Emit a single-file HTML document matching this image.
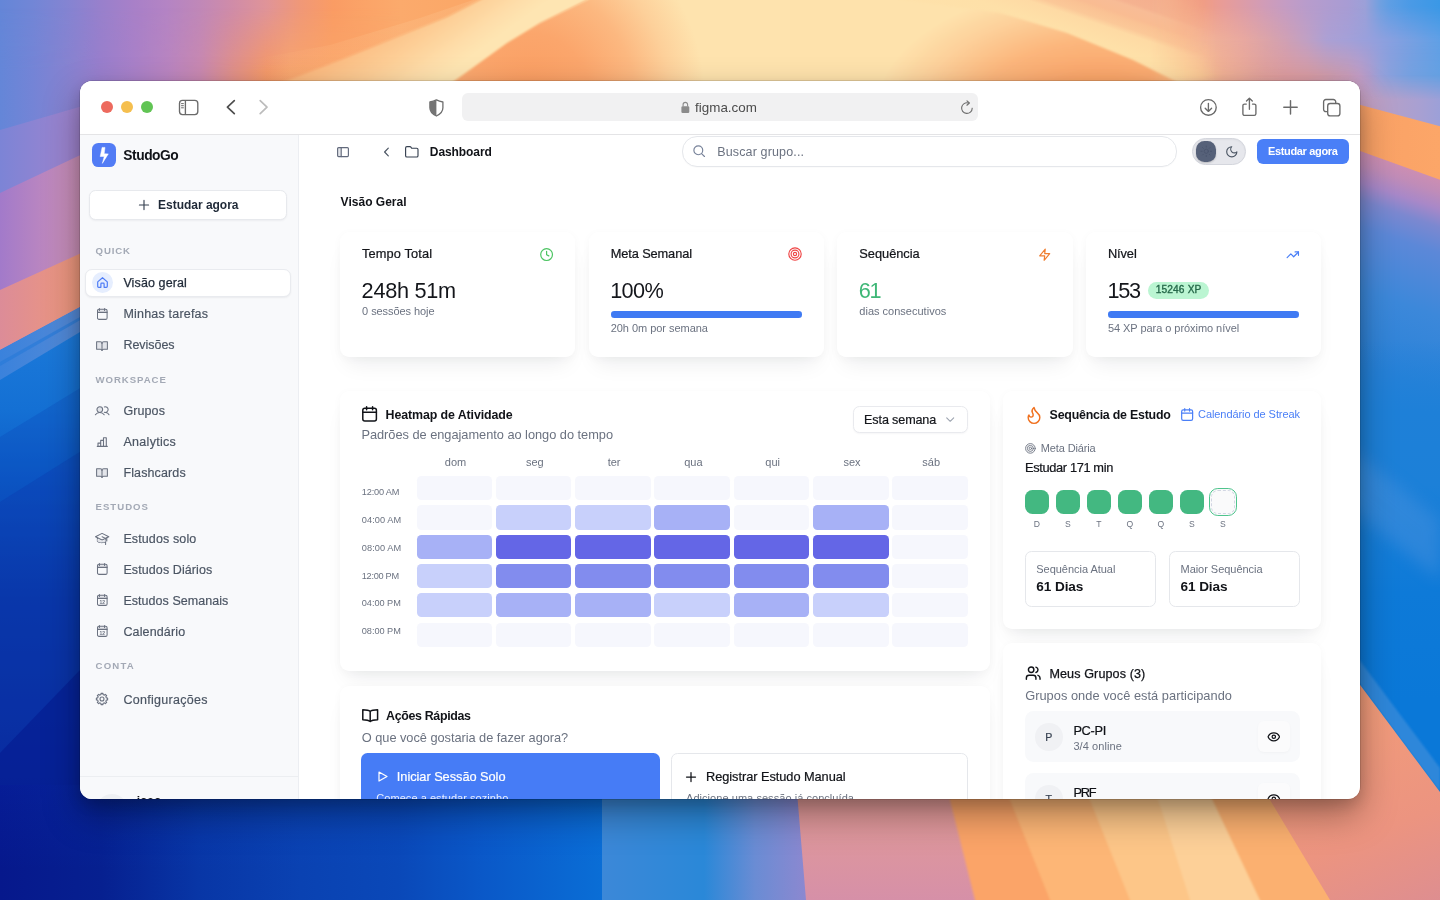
<!DOCTYPE html>
<html lang="pt-BR">
<head>
<meta charset="utf-8">
<title>StudoGo – Dashboard</title>
<style>
*{box-sizing:border-box;margin:0;padding:0}
html,body{width:1440px;height:900px;overflow:hidden;background:#0a38a8}
body{font-family:"Liberation Sans",sans-serif;color:#111827;position:relative}
.abs{position:absolute}
#wall{position:absolute;left:0;top:0;width:1440px;height:900px;display:block}
#win{position:absolute;left:80px;top:81px;width:1280px;height:718px;border-radius:12px;background:#fff;overflow:hidden;z-index:2}
#c{position:absolute;left:-80px;top:-81px;width:1440px;height:900px}
#win{will-change:transform;transform:translateZ(0)}
#shadow{position:absolute;left:80px;top:81px;width:1280px;height:718px;border-radius:12px;z-index:1;box-shadow:0 0 0 0.5px rgba(0,0,0,.22),0 16px 36px rgba(0,0,0,.34),0 6px 14px rgba(0,0,0,.14)}
.t{position:absolute;white-space:nowrap;line-height:1}
svg{display:block;overflow:visible}
.ico{position:absolute}

.card{position:absolute;background:#fff;border-radius:9px;box-shadow:0 14px 22px -8px rgba(17,24,39,.08),0 2px 10px rgba(17,24,39,.03)}
.med{-webkit-text-stroke:.22px currentColor}

</style>
</head>
<body>
<svg id="wall" viewBox="0 0 1440 900" width="1440" height="900" preserveAspectRatio="none">
<defs>
 <linearGradient id="gTopL" gradientUnits="userSpaceOnUse" x1="0" y1="0" x2="600" y2="0"><stop offset="0.000" stop-color="#6486d8"/><stop offset="0.055" stop-color="#7286d6"/><stop offset="0.112" stop-color="#8484d2"/><stop offset="0.167" stop-color="#9880cc"/><stop offset="0.222" stop-color="#a880c8"/><stop offset="0.278" stop-color="#b484c4"/><stop offset="0.333" stop-color="#c088b8"/><stop offset="0.388" stop-color="#d08ca8"/><stop offset="0.445" stop-color="#e09498"/><stop offset="0.500" stop-color="#f09878"/><stop offset="0.555" stop-color="#fa9c64"/><stop offset="0.612" stop-color="#fba468"/><stop offset="0.667" stop-color="#fbaa6c"/><stop offset="0.750" stop-color="#fba868"/><stop offset="1.000" stop-color="#fba468"/></linearGradient>
 <linearGradient id="rowB" gradientUnits="userSpaceOnUse" x1="0" y1="0" x2="400" y2="0"><stop offset="0.000" stop-color="#6486d8"/><stop offset="0.083" stop-color="#7484d6"/><stop offset="0.168" stop-color="#8682d0"/><stop offset="0.250" stop-color="#987ecc"/><stop offset="0.333" stop-color="#a880c8"/><stop offset="0.417" stop-color="#b884c0"/><stop offset="0.500" stop-color="#c888b0"/><stop offset="0.583" stop-color="#e09088"/><stop offset="0.667" stop-color="#f49868"/><stop offset="0.725" stop-color="#f8a46c"/><stop offset="0.825" stop-color="#faa468"/><stop offset="0.917" stop-color="#fba468"/><stop offset="1.000" stop-color="#fbaa6c"/></linearGradient>
 <linearGradient id="gmB" gradientUnits="userSpaceOnUse" x1="0" y1="8" x2="0" y2="72"><stop offset="0" stop-color="#fff" stop-opacity="0"/><stop offset="1" stop-color="#fff" stop-opacity="1"/></linearGradient>
 <mask id="mB" maskUnits="userSpaceOnUse" x="-5" y="-5" width="410" height="110"><rect x="-5" y="-5" width="410" height="110" fill="url(#gmB)"/></mask>
 <radialGradient id="gHumpL" gradientUnits="userSpaceOnUse" cx="0" cy="0" r="1" gradientTransform="translate(530 100) scale(175 190)">
  <stop offset="0" stop-color="#fa9c60"/><stop offset=".35" stop-color="#fba66c"/><stop offset=".6" stop-color="#fcb880"/><stop offset=".8" stop-color="#fdd09a"/><stop offset="1" stop-color="#fee3ae"/>
 </radialGradient>
 <radialGradient id="gHumpR" gradientUnits="userSpaceOnUse" cx="0" cy="0" r="1" gradientTransform="translate(1100 112) scale(225 128)">
  <stop offset="0" stop-color="#f8a062"/><stop offset=".3" stop-color="#faa76c"/><stop offset=".55" stop-color="#fcb67c"/><stop offset=".8" stop-color="#fdd09a"/><stop offset="1" stop-color="#fee2ac"/>
 </radialGradient>
 <linearGradient id="gPeachBand" gradientUnits="userSpaceOnUse" x1="340" y1="15" x2="405" y2="105">
  <stop offset="0" stop-color="#fbaa70"/><stop offset=".3" stop-color="#fcbc82"/><stop offset=".6" stop-color="#fdce96"/><stop offset=".85" stop-color="#fedeaa"/><stop offset="1" stop-color="#fee5b2"/>
 </linearGradient>
 <linearGradient id="gTopR" gradientUnits="userSpaceOnUse" x1="960" y1="40" x2="1021.8" y2="-141.8">
  <stop offset="0" stop-color="#fee2ac"/><stop offset=".225" stop-color="#fee0a8"/><stop offset=".31" stop-color="#fedaa4"/>
  <stop offset=".34" stop-color="#fbc898"/><stop offset=".38" stop-color="#fac294"/><stop offset=".40" stop-color="#f9bc92"/><stop offset=".45" stop-color="#f8bc96"/><stop offset=".47" stop-color="#f5b290"/><stop offset=".55" stop-color="#f4ae8e"/><stop offset=".62" stop-color="#f0a084"/><stop offset="1" stop-color="#ec9c88"/>
 </linearGradient>
 <linearGradient id="gTopB" gradientUnits="userSpaceOnUse" x1="1181" y1="0" x2="1310.4" y2="-129.4">
  <stop offset="0" stop-color="#eca094" stop-opacity="0"/><stop offset=".244" stop-color="#e29aa0" stop-opacity=".9"/><stop offset=".322" stop-color="#d0a0c0"/><stop offset=".42" stop-color="#c0a0c8"/><stop offset=".497" stop-color="#b0a0d0"/>
  <stop offset=".612" stop-color="#a0a0d8"/><stop offset=".847" stop-color="#70a0e0"/><stop offset="1" stop-color="#3a98e8"/>
 </linearGradient>
 <linearGradient id="gFaint" gradientUnits="userSpaceOnUse" x1="250" y1="0" x2="400" y2="0"><stop offset="0" stop-color="#fdc088" stop-opacity="0"/><stop offset="1" stop-color="#fdc088" stop-opacity=".35"/></linearGradient>
 <!-- left strip band gradients (horizontal) -->
 <linearGradient id="l1" gradientUnits="userSpaceOnUse" x1="0" y1="0" x2="133" y2="0"><stop offset="0.000" stop-color="#6486d8"/><stop offset="0.248" stop-color="#7484d6"/><stop offset="0.504" stop-color="#8682d0"/><stop offset="0.752" stop-color="#987ecc"/><stop offset="1.000" stop-color="#a680c8"/></linearGradient>
 <linearGradient id="l2" gradientUnits="userSpaceOnUse" x1="0" y1="0" x2="95" y2="0"><stop offset="0" stop-color="#7c84d6"/><stop offset="1" stop-color="#a884cc"/></linearGradient>
 <linearGradient id="l3" gradientUnits="userSpaceOnUse" x1="0" y1="0" x2="95" y2="0"><stop offset="0" stop-color="#a27aca"/><stop offset=".45" stop-color="#ba86c0"/><stop offset="1" stop-color="#d294b2"/></linearGradient>
 <linearGradient id="l4" gradientUnits="userSpaceOnUse" x1="0" y1="0" x2="95" y2="0"><stop offset="0" stop-color="#dc8c98"/><stop offset="1" stop-color="#f29a76"/></linearGradient>
 <linearGradient id="l5" gradientUnits="userSpaceOnUse" x1="0" y1="0" x2="95" y2="0"><stop offset="0" stop-color="#3a82dc"/><stop offset="1" stop-color="#5a8cd6"/></linearGradient>
 <linearGradient id="lBlue" gradientUnits="userSpaceOnUse" x1="0" y1="330" x2="0" y2="900">
  <stop offset="0" stop-color="#1c7ada"/><stop offset=".14" stop-color="#1470d4"/><stop offset=".26" stop-color="#0c5cc8"/><stop offset=".47" stop-color="#0a3aaa"/><stop offset=".7" stop-color="#082c9e"/><stop offset="1" stop-color="#061a8c"/>
 </linearGradient>
 <linearGradient id="row0" gradientUnits="userSpaceOnUse" x1="1140" y1="0" x2="1440" y2="0"><stop offset="0.000" stop-color="#f8c090"/><stop offset="0.070" stop-color="#f6b48c"/><stop offset="0.140" stop-color="#f4a482"/><stop offset="0.207" stop-color="#f09c84"/><stop offset="0.277" stop-color="#e89c98"/><stop offset="0.347" stop-color="#dc9ca8"/><stop offset="0.417" stop-color="#d09cb8"/><stop offset="0.487" stop-color="#c49cc4"/><stop offset="0.557" stop-color="#b89ccc"/><stop offset="0.623" stop-color="#b09cd0"/><stop offset="0.693" stop-color="#a89cd4"/><stop offset="0.750" stop-color="#9ca0d8"/><stop offset="0.800" stop-color="#70a0e0"/><stop offset="0.833" stop-color="#5e9ee4"/><stop offset="0.903" stop-color="#4a9ae6"/><stop offset="1.000" stop-color="#3a98e6"/></linearGradient>
 <linearGradient id="row40" gradientUnits="userSpaceOnUse" x1="1140" y1="0" x2="1440" y2="0"><stop offset="0.000" stop-color="#fcc890"/><stop offset="0.140" stop-color="#f8b890"/><stop offset="0.243" stop-color="#f0b098"/><stop offset="0.347" stop-color="#e8a8a0"/><stop offset="0.417" stop-color="#dca4a8"/><stop offset="0.487" stop-color="#d0a0b4"/><stop offset="0.557" stop-color="#c0a0c4"/><stop offset="0.623" stop-color="#aca0d4"/><stop offset="0.693" stop-color="#a4a0d8"/><stop offset="0.763" stop-color="#98a0dc"/><stop offset="0.833" stop-color="#88a0e0"/><stop offset="0.903" stop-color="#78a0e2"/><stop offset="1.000" stop-color="#60a0e6"/></linearGradient>
 <linearGradient id="row75" gradientUnits="userSpaceOnUse" x1="1140" y1="0" x2="1440" y2="0"><stop offset="0.000" stop-color="#fcd098"/><stop offset="0.140" stop-color="#fcc890"/><stop offset="0.207" stop-color="#f8c090"/><stop offset="0.277" stop-color="#f0b094"/><stop offset="0.347" stop-color="#e8a898"/><stop offset="0.417" stop-color="#e0a09c"/><stop offset="0.487" stop-color="#dc9ca0"/><stop offset="0.557" stop-color="#d89ca4"/><stop offset="0.623" stop-color="#d09cac"/><stop offset="0.693" stop-color="#c89cb8"/><stop offset="0.730" stop-color="#c09cc4"/><stop offset="0.763" stop-color="#b09ccc"/><stop offset="0.800" stop-color="#98a0d8"/><stop offset="0.833" stop-color="#88a0dc"/><stop offset="0.903" stop-color="#74a0e0"/><stop offset="1.000" stop-color="#64a0e2"/></linearGradient>
 <linearGradient id="gmH" gradientUnits="userSpaceOnUse" x1="1150" y1="0" x2="1215" y2="0"><stop offset="0" stop-color="#fff" stop-opacity="0"/><stop offset="1" stop-color="#fff" stop-opacity="1"/></linearGradient>
 <linearGradient id="gm1" gradientUnits="userSpaceOnUse" x1="0" y1="6" x2="0" y2="40"><stop offset="0" stop-color="#fff" stop-opacity="0"/><stop offset="1" stop-color="#fff" stop-opacity="1"/></linearGradient>
 <linearGradient id="gm2" gradientUnits="userSpaceOnUse" x1="0" y1="40" x2="0" y2="75"><stop offset="0" stop-color="#fff" stop-opacity="0"/><stop offset="1" stop-color="#fff" stop-opacity="1"/></linearGradient>
 <mask id="mH" maskUnits="userSpaceOnUse" x="1130" y="-5" width="320" height="160"><rect x="1130" y="-5" width="320" height="160" fill="url(#gmH)"/></mask>
 <mask id="m1" maskUnits="userSpaceOnUse" x="1130" y="-5" width="320" height="160"><rect x="1130" y="-5" width="320" height="160" fill="url(#gm1)"/></mask>
 <mask id="m2" maskUnits="userSpaceOnUse" x="1130" y="-5" width="320" height="160"><rect x="1130" y="-5" width="320" height="160" fill="url(#gm2)"/></mask>
 <linearGradient id="rTopBase" gradientUnits="userSpaceOnUse" x1="1340" y1="0" x2="1440" y2="0"><stop offset="0" stop-color="#cca0bc"/><stop offset=".2" stop-color="#c8a0c0"/><stop offset=".6" stop-color="#b4a0cc"/><stop offset="1" stop-color="#a4a0d6"/></linearGradient>
 <linearGradient id="rBandC" gradientUnits="userSpaceOnUse" x1="1355" y1="0" x2="1440" y2="0"><stop offset="0" stop-color="#f49e68"/><stop offset=".2" stop-color="#faa266"/><stop offset="1" stop-color="#fca668"/></linearGradient>
 <linearGradient id="row100" gradientUnits="userSpaceOnUse" x1="1140" y1="0" x2="1440" y2="0"><stop offset="0.000" stop-color="#f0b094"/><stop offset="0.533" stop-color="#d89ca4"/><stop offset="0.667" stop-color="#cca0bc"/><stop offset="0.733" stop-color="#c8a0c0"/><stop offset="0.817" stop-color="#b8a0c8"/><stop offset="0.867" stop-color="#b0a0cc"/><stop offset="0.933" stop-color="#a8a0d2"/><stop offset="1.000" stop-color="#9ca0d8"/></linearGradient>
 <linearGradient id="gm3" gradientUnits="userSpaceOnUse" x1="0" y1="75" x2="0" y2="100"><stop offset="0" stop-color="#fff" stop-opacity="0"/><stop offset="1" stop-color="#fff" stop-opacity="1"/></linearGradient>
 <mask id="m3" maskUnits="userSpaceOnUse" x="1130" y="-5" width="320" height="160"><rect x="1130" y="-5" width="320" height="160" fill="url(#gm3)"/></mask>
 <!-- right strip -->
 <linearGradient id="rBand" gradientUnits="userSpaceOnUse" x1="1400" y1="106" x2="1392.3" y2="128.7">
  <stop offset="0" stop-color="#f09c80" stop-opacity="0"/><stop offset=".5" stop-color="#f89e68" stop-opacity=".8"/><stop offset="1" stop-color="#fba060"/>
 </linearGradient>
 <linearGradient id="rBelow" gradientUnits="userSpaceOnUse" x1="1400" y1="166" x2="1319.5" y2="402.75">
  <stop offset="0" stop-color="#cc8eb2"/><stop offset=".048" stop-color="#c08cb8"/><stop offset=".112" stop-color="#a888c8"/><stop offset=".18" stop-color="#7c88d0"/><stop offset=".28" stop-color="#5c88d8"/><stop offset=".52" stop-color="#3c88da"/><stop offset=".8" stop-color="#2a82d8"/><stop offset="1" stop-color="#2080d8"/>
 </linearGradient>
 <linearGradient id="rBlue" gradientUnits="userSpaceOnUse" x1="0" y1="340" x2="0" y2="700">
  <stop offset="0" stop-color="#2080d8" stop-opacity="0"/><stop offset=".2" stop-color="#1e80d8"/><stop offset=".4" stop-color="#1c80d8"/><stop offset=".7" stop-color="#0e7ad8"/><stop offset="1" stop-color="#0a78d8"/>
 </linearGradient>
 <linearGradient id="rSal" gradientUnits="userSpaceOnUse" x1="1360" y1="700" x2="1440" y2="900"><stop offset="0" stop-color="#f29c7a"/><stop offset=".6" stop-color="#ec9480"/><stop offset="1" stop-color="#de8e90"/></linearGradient>
 <!-- bottom strip -->
 <linearGradient id="bFade" gradientUnits="userSpaceOnUse" x1="0" y1="785" x2="0" y2="870"><stop offset="0" stop-color="#0a50ff" stop-opacity=".085"/><stop offset="1" stop-color="#0a50ff" stop-opacity="0"/></linearGradient>
 <linearGradient id="bBlue" gradientUnits="userSpaceOnUse" x1="0" y1="0" x2="602" y2="0">
  <stop offset="0" stop-color="#06188c"/><stop offset=".17" stop-color="#062090"/><stop offset=".33" stop-color="#0836a6"/><stop offset=".5" stop-color="#0a42b2"/><stop offset=".66" stop-color="#0a48b8"/><stop offset=".8" stop-color="#0a58c8"/><stop offset="1" stop-color="#0a6ed6"/>
 </linearGradient>
 <linearGradient id="bLight" gradientUnits="userSpaceOnUse" x1="602" y1="0" x2="806" y2="0">
  <stop offset="0" stop-color="#3c88d8"/><stop offset=".5" stop-color="#2a88d8"/><stop offset=".75" stop-color="#6a8cd4"/><stop offset="1" stop-color="#8c88d0"/>
 </linearGradient>
 <linearGradient id="bPink" gradientUnits="userSpaceOnUse" x1="0" y1="799" x2="0" y2="900"><stop offset="0" stop-color="#e29a96"/><stop offset="1" stop-color="#d690a8"/></linearGradient>
 <filter id="blur2" x="-5%" y="-5%" width="110%" height="110%"><feGaussianBlur stdDeviation="1.2"/></filter>
 <filter id="blur8" x="-20%" y="-20%" width="140%" height="140%"><feGaussianBlur stdDeviation="8"/></filter>
 <clipPath id="cTop"><polygon points="0,0 1440,0 1440,140 1340,140 1340,100 0,100"/></clipPath>
 <clipPath id="cLeft"><rect x="0" y="82" width="100" height="730"/></clipPath>
 <clipPath id="cRight"><polygon points="1340,82 1440,82 1440,900 1340,900"/></clipPath>
 <clipPath id="cBot"><rect x="0" y="785" width="1440" height="150"/></clipPath>
</defs>
<rect width="1440" height="900" fill="#0a50c0"/>
<!-- TOP STRIP -->
<g clip-path="url(#cTop)">
 <rect x="0" y="0" width="600" height="100" fill="url(#gTopL)"/>
 <rect x="0" y="0" width="400" height="100" fill="url(#rowB)" mask="url(#mB)"/>
 <polygon points="587,0 540,23 507,43 453,82 430,100 860,100 860,0" fill="url(#gHumpL)"/>
 <rect x="790" y="0" width="650" height="100" fill="url(#gTopR)"/>
 <polygon points="850,100 850,-10 880,-10 900,0 1000,13 1067,33 1133,60 1177,82 1215,100" fill="url(#gHumpR)" filter="url(#blur2)"/>
 <g mask="url(#mH)"><rect x="1130" y="-5" width="320" height="150" fill="url(#row0)"/><rect x="1130" y="-5" width="320" height="150" fill="url(#row40)" mask="url(#m1)"/><rect x="1130" y="-5" width="320" height="150" fill="url(#row75)" mask="url(#m2)"/><rect x="1130" y="-5" width="320" height="150" fill="url(#row100)" mask="url(#m3)"/></g>
 <polygon points="240,62 330,45 420,18 473,0 480,0 447,17 407,33 340,60 283,82 240,100" fill="url(#gFaint)"/>
 <polygon points="240,100 283,82 340,60 407,33 447,17 480,0 500,-10 605,-10 587,0 540,23 507,43 453,82 430,100" fill="url(#gPeachBand)" filter="url(#blur2)"/>
</g>
<!-- LEFT STRIP -->
<g clip-path="url(#cLeft)">
 <rect x="0" y="300" width="110" height="600" fill="url(#lBlue)"/>
 <polygon points="0,60 110,60 110,291 0,350" fill="url(#l1)"/>
 <polygon points="0,130 110,98 110,291 0,350" fill="url(#l2)"/>
 <polygon points="0,193 110,141 110,291 0,350" fill="url(#l3)"/>
 <polygon points="0,290 110,240 110,291 0,350" fill="url(#l4)"/>
 <polygon points="0,350 110,291 110,314 0,380" fill="url(#l5)"/>
 <polygon points="0,362 110,300 110,303 0,366" fill="#2a7ad8" opacity=".7"/>
 <polygon points="0,437 110,370 110,900 0,900" fill="#0a3cb0" opacity=".22"/>
 <polygon points="0,502 110,433 110,900 0,900" fill="#0a30a8" opacity=".25"/>
 <polygon points="0,753 110,639 110,900 0,900" fill="#04148a" opacity=".45"/>
</g>
<!-- BOTTOM STRIP -->
<g clip-path="url(#cBot)">
 <rect x="0" y="780" width="603" height="150" fill="url(#bBlue)"/>
 <rect x="0" y="780" width="603" height="150" fill="url(#bFade)"/>
 <rect x="602" y="780" width="210" height="120" fill="url(#bLight)"/>
 <polygon points="796,780 960,780 985,900 806,900" fill="url(#bPink)"/>
 <g filter="url(#blur2)">
 <polygon points="945,780 1010,780 1065,930 982.500,930" fill="#fba468"/>
 <polygon points="1002,780 1090,780 1145,930 1062,930" fill="#fdb676"/>
 <polygon points="1082,780 1160,780 1202.500,930 1142,930" fill="#fdc688"/>
 <polygon points="1152,780 1215,780 1276,930 1199.500,930" fill="#fdd098"/>
 <polygon points="1203,780 1270,780 1350,930 1274,930" fill="#fbb070"/>
 </g>
 <polygon points="1258,780 1440,780 1440,900 1330,900" fill="url(#rSal)"/>
</g>
<!-- RIGHT STRIP -->
<g clip-path="url(#cRight)">
 <polygon points="1340,140 1440,176 1440,460 1340,460" fill="url(#rBelow)"/>
 <polygon points="1340,99.600 1440,126.300 1440,179.700 1340,143.800" fill="url(#rBandC)"/>
 <rect x="1340" y="340" width="100" height="460" fill="url(#rBlue)"/>
 <polygon points="1340,440 1440,520 1440,580 1340,500" fill="#5a98e0" opacity=".35" filter="url(#blur8)"/>
 <polygon points="1340,634 1440,768 1440,792 1340,658" fill="#4e94dc" opacity=".55" filter="url(#blur2)"/>
 <polygon points="1340,658 1440,792 1440,900 1340,900" fill="url(#rSal)"/>
</g>
</svg>

<div id="shadow"></div>
<div id="win">
<div id="c">
<div class="abs" style="left:80px;top:134px;width:219px;height:666px;background:#f8f9fb;border-right:1px solid #eceef2"></div>
<div class="abs" style="left:92px;top:142.8px;width:24.1px;height:24.2px;border-radius:6.300px;background:#527cf5"></div>
<svg class="ico" style="left:92px;top:142.800px" width="24.200" height="24.200" viewBox="92 142.800 24.200 24.200"><path d="M102.100 147.200L105 147.200L104.200 153.500L108.300 153.700L102.350 163.200L104.250 156.300L100.200 156.300Z" fill="#fff" stroke="#fff" stroke-width=".5" stroke-linejoin="round"/></svg>
<div class="t" style="left:123.30px;top:149.04px;font-size:13.8px;color:#111318;font-weight:700;letter-spacing:-0.464px;">StudoGo</div>
<div class="abs" style="left:88.8px;top:190px;width:198.4px;height:30px;border-radius:6.5px;background:#fff;border:1px solid #e7e9ed;box-shadow:0 1px 2px rgba(16,24,40,.05)"></div>
<svg class="ico" style="left:139px;top:200px" width="10" height="10" viewBox="0 0 10 10" fill="none" stroke="#374151" stroke-width="1.15" stroke-linecap="round" stroke-linejoin="round" ><path d="M5 .4V9.600M.4 5H9.600"/></svg>
<div class="t" style="left:158.00px;top:198.88px;font-size:12px;color:#1f2937;font-weight:700;letter-spacing:-0.016px;">Estudar agora</div>
<div class="t" style="left:95.60px;top:246.20px;font-size:9.6px;color:#a3a9b5;font-weight:700;letter-spacing:0.856px;">QUICK</div>
<div class="t" style="left:95.60px;top:374.50px;font-size:9.6px;color:#a3a9b5;font-weight:700;letter-spacing:0.942px;">WORKSPACE</div>
<div class="t" style="left:95.60px;top:502.00px;font-size:9.6px;color:#a3a9b5;font-weight:700;letter-spacing:0.987px;">ESTUDOS</div>
<div class="t" style="left:95.60px;top:660.80px;font-size:9.6px;color:#a3a9b5;font-weight:700;letter-spacing:1.159px;">CONTA</div>
<div class="abs" style="left:85px;top:268.5px;width:206.2px;height:28.6px;border-radius:7px;background:#fff;border:1px solid #e9ebef;box-shadow:0 1px 2px rgba(16,24,40,.06)"></div>
<div class="abs" style="left:92px;top:272.4px;width:21px;height:21px;border-radius:50%;background:#e6eefe"></div>
<svg class="ico" style="left:97px;top:277px" width="11" height="11" viewBox="0 0 11 11" fill="none" stroke="#4f7df6" stroke-width="1.2" stroke-linecap="round" stroke-linejoin="round" ><path d="M.7 4.900L5.500 .7L10.300 4.900V9.300C10.300 9.900 9.900 10.300 9.300 10.300H7.100V6.900C7.100 6.500 6.800 6.200 6.400 6.200H4.600C4.200 6.200 3.900 6.500 3.900 6.900V10.300H1.700C1.100 10.300 .7 9.900 .7 9.300Z"/></svg>
<div class="t" style="left:123.40px;top:277.38px;font-size:12.5px;color:#1f2937;letter-spacing:0.117px;-webkit-text-stroke:.25px #1f2937;">Visão geral</div>
<div class="t" style="left:123.40px;top:308.38px;font-size:12.5px;color:#4b5563;letter-spacing:0.201px;-webkit-text-stroke:.18px #4b5563;">Minhas tarefas</div>
<svg class="ico" style="left:97px;top:307.55px" width="10.6" height="11.9" viewBox="0 0 10.6 11.9" fill="none" stroke="#6b7280" stroke-width="1.05" stroke-linecap="round" stroke-linejoin="round" ><rect x=".5" y="1.300" width="9.600" height="3.100" fill="#e3e5ea" stroke="none"/><rect x=".5" y="1.300" width="9.600" height="10.100" rx="1.500"/><path d="M.5 4.400H10.100M2.400 .4V2.400M7.600 .4V2.400"/></svg>
<div class="t" style="left:123.40px;top:339.38px;font-size:12.5px;color:#4b5563;letter-spacing:-0.028px;-webkit-text-stroke:.18px #4b5563;">Revisões</div>
<svg class="ico" style="left:96px;top:340.5px" width="12" height="10.2" viewBox="0 0 12 10.200" fill="none" stroke="#6b7280" stroke-width="1.05" stroke-linecap="round" stroke-linejoin="round" ><path d="M6 2.200C6 1.300 5.200 .8 4.300 .8H.6V8.200H4.300C5.200 8.200 6 8.700 6 9.600C6 8.700 6.800 8.200 7.700 8.200H11.400V.8H7.700C6.800 .8 6 1.300 6 2.200Z" fill="#e3e5ea"/><path d="M6 2.200V9.600"/></svg>
<div class="t" style="left:123.40px;top:405.07px;font-size:12.5px;color:#4b5563;letter-spacing:0.100px;-webkit-text-stroke:.18px #4b5563;">Grupos</div>
<svg class="ico" style="left:95px;top:406px" width="14.4" height="9.4" viewBox="0 0 14.400 9.400" fill="none" stroke="#6b7280" stroke-width="1.05" stroke-linecap="round" stroke-linejoin="round" ><circle cx="4.800" cy="3.600" r="2.850" fill="#e3e5ea"/><path d="M.4 8.800C1.400 7.200 3 6.450 4.800 6.450C6.600 6.450 8.200 7.200 9.200 8.800M9.330 .92A2.850 2.850 0 1 1 9.330 6.280M10.600 6.450C12.100 6.600 13.300 7.400 14 8.800"/></svg>
<div class="t" style="left:123.40px;top:435.98px;font-size:12.5px;color:#4b5563;letter-spacing:0.308px;-webkit-text-stroke:.18px #4b5563;">Analytics</div>
<svg class="ico" style="left:97px;top:436.5px" width="10.6" height="10" viewBox="0 0 10.6 10" fill="none" stroke="#6b7280" stroke-width="1.1" stroke-linecap="round" stroke-linejoin="round" ><path d="M.3 9.400H10.300M1 9.400V6.100H3.700V9.400M3.700 9.400V3.400H6.500V9.400M6.500 9.400V.7H9.300V9.400"/></svg>
<div class="t" style="left:123.40px;top:467.18px;font-size:12.5px;color:#4b5563;letter-spacing:0.126px;-webkit-text-stroke:.18px #4b5563;">Flashcards</div>
<svg class="ico" style="left:96px;top:468.3px" width="12" height="10.2" viewBox="0 0 12 10.200" fill="none" stroke="#6b7280" stroke-width="1.05" stroke-linecap="round" stroke-linejoin="round" ><path d="M6 2.200C6 1.300 5.200 .8 4.300 .8H.6V8.200H4.300C5.200 8.200 6 8.700 6 9.600C6 8.700 6.800 8.200 7.700 8.200H11.400V.8H7.700C6.800 .8 6 1.300 6 2.200Z" fill="#e3e5ea"/><path d="M6 2.200V9.600"/></svg>
<div class="t" style="left:123.40px;top:533.08px;font-size:12.5px;color:#4b5563;letter-spacing:0.118px;-webkit-text-stroke:.18px #4b5563;">Estudos solo</div>
<svg class="ico" style="left:95px;top:533px" width="14.4" height="12" viewBox="0 0 14.400 12" fill="none" stroke="#6b7280" stroke-width="1.05" stroke-linecap="round" stroke-linejoin="round" ><path d="M7.100 .4L13.800 3.700L7.100 7L.5 3.700Z"/><path d="M2.400 4.800V8.100C3.900 9.900 8 10.100 10.600 8.600M11.800 4.800V8.100M7.100 3.700L10.600 5.400V11.500" /><path d="M2.400 6V8.100C3.900 9.900 8 10.100 10.600 8.600V6.500L7.100 7.900Z" fill="#e3e5ea" stroke="none"/></svg>
<div class="t" style="left:123.40px;top:563.98px;font-size:12.5px;color:#4b5563;letter-spacing:0.097px;-webkit-text-stroke:.18px #4b5563;">Estudos Diários</div>
<svg class="ico" style="left:97px;top:563.15px" width="10.6" height="11.9" viewBox="0 0 10.6 11.9" fill="none" stroke="#6b7280" stroke-width="1.05" stroke-linecap="round" stroke-linejoin="round" ><rect x=".5" y="1.300" width="9.600" height="3.100" fill="#e3e5ea" stroke="none"/><rect x=".5" y="1.300" width="9.600" height="10.100" rx="1.500"/><path d="M.5 4.400H10.100M2.400 .4V2.400M7.600 .4V2.400"/></svg>
<div class="t" style="left:123.40px;top:595.08px;font-size:12.5px;color:#4b5563;letter-spacing:0.048px;-webkit-text-stroke:.18px #4b5563;">Estudos Semanais</div>
<svg class="ico" style="left:97px;top:594.25px" width="10.6" height="11.9" viewBox="0 0 10.6 11.9" fill="none" stroke="#6b7280" stroke-width="1.05" stroke-linecap="round" stroke-linejoin="round" ><rect x=".5" y="1.300" width="9.600" height="3.100" fill="#e3e5ea" stroke="none"/><rect x=".5" y="1.300" width="9.600" height="10.100" rx="1.500"/><path d="M.5 4.400H10.100M2.400 .4V2.400M7.600 .4V2.400"/><text x="5.300" y="9.800" text-anchor="middle" font-family="Liberation Sans" font-size="5" font-weight="700" stroke="none" fill="#6b7280">12</text></svg>
<div class="t" style="left:123.40px;top:625.67px;font-size:12.5px;color:#4b5563;letter-spacing:0.143px;-webkit-text-stroke:.18px #4b5563;">Calendário</div>
<svg class="ico" style="left:97px;top:624.85px" width="10.6" height="11.9" viewBox="0 0 10.6 11.9" fill="none" stroke="#6b7280" stroke-width="1.05" stroke-linecap="round" stroke-linejoin="round" ><rect x=".5" y="1.300" width="9.600" height="3.100" fill="#e3e5ea" stroke="none"/><rect x=".5" y="1.300" width="9.600" height="10.100" rx="1.500"/><path d="M.5 4.400H10.100M2.400 .4V2.400M7.600 .4V2.400"/><text x="5.300" y="9.800" text-anchor="middle" font-family="Liberation Sans" font-size="5" font-weight="700" stroke="none" fill="#6b7280">12</text></svg>
<div class="t" style="left:123.40px;top:693.67px;font-size:12.5px;color:#4b5563;letter-spacing:0.284px;-webkit-text-stroke:.18px #4b5563;">Configurações</div>
<svg class="ico" style="left:96.25px;top:693px" width="12" height="12" viewBox="0 0 12 12" fill="none" stroke="#6b7280" stroke-width="1.1" stroke-linecap="round" stroke-linejoin="round" ><path d="M5.02 0.38L6.98 0.38L6.98 1.61L8.41 2.20L9.28 1.34L10.66 2.72L9.80 3.59L10.39 5.02L11.62 5.02L11.62 6.98L10.39 6.98L9.80 8.41L10.66 9.28L9.28 10.66L8.41 9.80L6.98 10.39L6.98 11.62L5.02 11.62L5.02 10.39L3.59 9.80L2.72 10.66L1.34 9.28L2.20 8.41L1.61 6.98L0.38 6.98L0.38 5.02L1.61 5.02L2.20 3.59L1.34 2.72L2.72 1.34L3.59 2.20L5.02 1.61Z"/><circle cx="6" cy="6" r="2"/></svg>
<div class="abs" style="left:80px;top:776px;width:219px;height:1px;background:#eceef1"></div>
<div class="abs" style="left:96px;top:794px;width:32px;height:32px;border-radius:50%;background:#eef0f3"></div>
<div class="t" style="left:136.70px;top:794.64px;font-size:12px;color:#111318;font-weight:700;">joao</div>
<svg class="ico" style="left:337.2px;top:146.6px" width="12" height="10.2" viewBox="0 0 12 10.200" fill="none" stroke="#626a7c" stroke-width="1.15" stroke-linecap="round" stroke-linejoin="round" ><rect x=".6" y=".6" width="3.600" height="9" fill="#e4e6eb" stroke="none"/><rect x=".6" y=".6" width="10.800" height="9" rx="1"/><path d="M4.200 .6V9.600"/></svg>
<svg class="ico" style="left:383px;top:146.5px" width="7" height="10" viewBox="0 0 7 10" fill="none" stroke="#4b5563" stroke-width="1.2" stroke-linecap="round" stroke-linejoin="round" ><path d="M5.300 1.200L1.600 5L5.300 8.800"/></svg>
<svg class="ico" style="left:405.3px;top:145.8px" width="13.6" height="11.6" viewBox="0 0 13.600 11.600" fill="none" stroke="#374151" stroke-width="1.15" stroke-linecap="round" stroke-linejoin="round" ><path d="M1.900 11H11.700C12.400 11 13 10.400 13 9.700V3.600C13 2.900 12.400 2.300 11.700 2.300H7.300C6.900 2.300 6.500 2.100 6.300 1.700L5.900 1.200C5.700 .8 5.300 .6 4.900 .6H1.900C1.200 .6 .6 1.200 .6 1.900V9.700C.6 10.400 1.200 11 1.900 11Z"/></svg>
<div class="t" style="left:429.80px;top:145.60px;font-size:12px;color:#111318;font-weight:700;letter-spacing:-0.076px;">Dashboard</div>
<div class="abs" style="left:681.7px;top:136.4px;width:495.4px;height:30.3px;border-radius:15px;background:#fff;border:1px solid #e5e7eb;box-shadow:0 1px 1px rgba(16,24,40,.02)"></div>
<svg class="ico" style="left:693.1px;top:145.4px" width="12.2" height="12.2" viewBox="0 0 12.400 12.400" fill="none" stroke="#78839a" stroke-width="1.2" stroke-linecap="round" stroke-linejoin="round" ><circle cx="5.400" cy="5.400" r="4.500"/><path d="M8.700 8.700L11.700 11.700"/></svg>
<div class="t" style="left:717.20px;top:145.55px;font-size:12.5px;color:#6b7280;letter-spacing:0.149px;">Buscar grupo...</div>
<div class="abs" style="left:1191.7px;top:138.3px;width:54.4px;height:26.5px;border-radius:13.300px;background:#e6e7ec;border:1px solid #d4d6dd;box-shadow:inset 0 1px 2px rgba(0,0,0,.04)"></div>
<div class="abs" style="left:1196px;top:141px;width:20.4px;height:21.2px;border-radius:8.500px;background:#566179;box-shadow:0 1px 2px rgba(0,0,0,.2)"></div>
<svg class="ico" style="left:1199.9px;top:145.3px" width="12.6" height="12.6" viewBox="0 0 24 24" fill="none" stroke="#4a556d" stroke-width="1.8" stroke-linecap="round" stroke-linejoin="round" ><circle cx="12" cy="12" r="4"/><path d="M12 2v2M12 20v2M4.930 4.930l1.410 1.410M17.660 17.660l1.410 1.410M2 12h2M20 12h2M6.340 17.660l-1.410 1.410M19.070 4.930l-1.410 1.410"/></svg>
<svg class="ico" style="left:1225.3px;top:145.4px" width="13.6" height="13.6" viewBox="0 0 24 24" fill="none" stroke="#4b5563" stroke-width="2" stroke-linecap="round" stroke-linejoin="round" ><path d="M12 3a6 6 0 0 0 9 9 9 9 0 1 1-9-9Z"/></svg>
<div class="abs" style="left:1257px;top:139.4px;width:92.2px;height:24.5px;border-radius:6.200px;background:#4a7ff7"></div>
<div class="t" style="left:1268.00px;top:146.19px;font-size:11px;color:#fff;font-weight:700;letter-spacing:-0.344px;">Estudar agora</div>
<div class="t" style="left:340.60px;top:195.60px;font-size:12px;color:#111318;font-weight:700;letter-spacing:0.016px;">Visão Geral</div>
<div class="card" style="left:339.7px;top:231.500px;width:235.300px;height:125px"></div>
<div class="card" style="left:588.5px;top:231.500px;width:235.300px;height:125px"></div>
<div class="card" style="left:837.4px;top:231.500px;width:235.300px;height:125px"></div>
<div class="card" style="left:1086.2px;top:231.500px;width:235.300px;height:125px"></div>
<div class="t" style="left:362.10px;top:248.05px;font-size:12.8px;color:#14161b;letter-spacing:0.112px;-webkit-text-stroke:.22px #14161b;">Tempo Total</div>
<svg class="ico" style="left:540px;top:247.6px" width="13.2" height="13.2" viewBox="0 0 13.200 13.200" fill="none" stroke="#4cc462" stroke-width="1.2" stroke-linecap="round" stroke-linejoin="round" ><circle cx="6.600" cy="6.600" r="5.900"/><path d="M6.600 3.300V6.700L8.800 7.900"/></svg>
<div class="t" style="left:361.60px;top:279.87px;font-size:21.7px;color:#14161b;letter-spacing:-0.271px;">248h 51m</div>
<div class="t" style="left:362.10px;top:305.50px;font-size:11px;color:#6b7280;letter-spacing:-0.071px;">0 sessões hoje</div>
<div class="t" style="left:610.70px;top:248.05px;font-size:12.8px;color:#14161b;letter-spacing:-0.110px;-webkit-text-stroke:.22px #14161b;">Meta Semanal</div>
<svg class="ico" style="left:788px;top:247.3px" width="14" height="14" viewBox="0 0 14 14" fill="none" stroke="#ef4444" stroke-width="1.15" stroke-linecap="round" stroke-linejoin="round" ><circle cx="7" cy="7" r="6.200"/><circle cx="7" cy="7" r="3.900"/><circle cx="7" cy="7" r="1.600"/></svg>
<div class="t" style="left:610.20px;top:279.87px;font-size:21.7px;color:#14161b;letter-spacing:-0.642px;">100%</div>
<div class="abs" style="left:610.6px;top:311px;width:191.7px;height:6.6px;border-radius:3.300px;background:#3f7af3"></div>
<div class="t" style="left:610.70px;top:322.70px;font-size:11px;color:#6b7280;letter-spacing:-0.038px;">20h 0m por semana</div>
<div class="t" style="left:859.30px;top:248.05px;font-size:12.8px;color:#14161b;letter-spacing:-0.009px;-webkit-text-stroke:.22px #14161b;">Sequência</div>
<svg class="ico" style="left:1037.8px;top:247.5px" width="13.4" height="13.4" viewBox="0 0 24 24" fill="none" stroke="#f07d2e" stroke-width="2.1" stroke-linecap="round" stroke-linejoin="round" ><path d="M13 2 3 14h9l-1 8 10-12h-9l1-8z"/></svg>
<div class="t" style="left:858.80px;top:279.87px;font-size:21.7px;color:#3fb777;letter-spacing:-1.412px;">61</div>
<div class="t" style="left:859.30px;top:305.50px;font-size:11px;color:#6b7280;letter-spacing:0.010px;">dias consecutivos</div>
<div class="t" style="left:1107.90px;top:248.05px;font-size:12.8px;color:#14161b;letter-spacing:-0.071px;-webkit-text-stroke:.22px #14161b;">Nível</div>
<svg class="ico" style="left:1286.2px;top:247.6px" width="13.6" height="13.6" viewBox="0 0 24 24" fill="none" stroke="#4a7ff7" stroke-width="2.1" stroke-linecap="round" stroke-linejoin="round" ><path d="M22 7 13.500 15.500 8.500 10.500 2 17"/><path d="M16 7h6v6"/></svg>
<div class="t" style="left:1107.40px;top:279.87px;font-size:21.7px;color:#14161b;letter-spacing:-1.229px;">153</div>
<div class="abs" style="left:1148.4px;top:281.6px;width:60.2px;height:17.1px;border-radius:8.600px;background:#bbf5d2"></div>
<div class="t" style="left:1155.70px;top:285.20px;font-size:10.2px;color:#26694a;letter-spacing:0.131px;-webkit-text-stroke:.35px #26694a;">15246 XP</div>
<div class="abs" style="left:1107.8px;top:311px;width:191.7px;height:6.6px;border-radius:3.300px;background:#3f7af3"></div>
<div class="t" style="left:1107.90px;top:322.70px;font-size:11px;color:#6b7280;letter-spacing:-0.049px;">54 XP para o próximo nível</div>
<div class="card" style="left:339.700px;top:391px;width:650.300px;height:280.400px"></div>
<svg class="ico" style="left:362.4px;top:406.2px" width="15.2" height="15.8" viewBox="0 0 15.200 15.800" fill="none" stroke="#111318" stroke-width="1.5" stroke-linecap="round" stroke-linejoin="round" ><rect x=".8" y="2.300" width="13.600" height="12.700" rx="2"/><path d="M.8 6.300H14.400M4.600 .8V3.700M10.600 .8V3.700"/></svg>
<div class="t" style="left:385.60px;top:408.60px;font-size:12.4px;color:#111318;font-weight:700;letter-spacing:-0.100px;">Heatmap de Atividade</div>
<div class="t" style="left:361.40px;top:429.30px;font-size:12.8px;color:#6b7280;letter-spacing:-0.024px;">Padrões de engajamento ao longo do tempo</div>
<div class="abs" style="left:853.3px;top:406.2px;width:114.5px;height:26.5px;border-radius:6.500px;background:#fff;border:1px solid #e9eaee;box-shadow:0 1px 2px rgba(16,24,40,.04)"></div>
<div class="t" style="left:864.10px;top:414.00px;font-size:12.6px;color:#14161b;letter-spacing:-0.138px;-webkit-text-stroke:.2px #14161b;">Esta semana</div>
<svg class="ico" style="left:945.8px;top:417.2px" width="8.4" height="5.2" viewBox="0 0 8.400 5.200" fill="none" stroke="#9ca3af" stroke-width="1.1" stroke-linecap="round" stroke-linejoin="round" ><path d="M.7 .8L4.200 4.300L7.700 .8"/></svg>
<div class="t" style="left:444.85px;top:457.05px;font-size:11px;color:#6b7280;">dom</div>
<div class="t" style="left:525.96px;top:457.05px;font-size:11px;color:#6b7280;">seg</div>
<div class="t" style="left:607.69px;top:457.05px;font-size:11px;color:#6b7280;">ter</div>
<div class="t" style="left:684.21px;top:457.05px;font-size:11px;color:#6b7280;">qua</div>
<div class="t" style="left:765.33px;top:457.05px;font-size:11px;color:#6b7280;">qui</div>
<div class="t" style="left:843.39px;top:457.05px;font-size:11px;color:#6b7280;">sex</div>
<div class="t" style="left:922.36px;top:457.05px;font-size:11px;color:#6b7280;">sáb</div>
<div class="t" style="left:361.80px;top:487.80px;font-size:9.2px;color:#6b7280;letter-spacing:-0.179px;">12:00 AM</div>
<div class="t" style="left:361.80px;top:515.70px;font-size:9.2px;color:#6b7280;letter-spacing:0.071px;">04:00 AM</div>
<div class="t" style="left:361.80px;top:543.60px;font-size:9.2px;color:#6b7280;letter-spacing:0.071px;">08:00 AM</div>
<div class="t" style="left:361.80px;top:571.50px;font-size:9.2px;color:#6b7280;letter-spacing:-0.291px;">12:00 PM</div>
<div class="t" style="left:361.80px;top:599.40px;font-size:9.2px;color:#6b7280;letter-spacing:-0.041px;">04:00 PM</div>
<div class="t" style="left:361.80px;top:627.30px;font-size:9.2px;color:#6b7280;letter-spacing:-0.041px;">08:00 PM</div>
<div class="abs" style="left:416.60px;top:476.20px;width:75.5px;height:24.1px;border-radius:4.500px;background:#f6f7fd"></div><div class="abs" style="left:495.88px;top:476.20px;width:75.5px;height:24.1px;border-radius:4.500px;background:#f6f7fd"></div><div class="abs" style="left:575.16px;top:476.20px;width:75.5px;height:24.1px;border-radius:4.500px;background:#f6f7fd"></div><div class="abs" style="left:654.44px;top:476.20px;width:75.5px;height:24.1px;border-radius:4.500px;background:#f6f7fd"></div><div class="abs" style="left:733.72px;top:476.20px;width:75.5px;height:24.1px;border-radius:4.500px;background:#f6f7fd"></div><div class="abs" style="left:813.00px;top:476.20px;width:75.5px;height:24.1px;border-radius:4.500px;background:#f6f7fd"></div><div class="abs" style="left:892.28px;top:476.20px;width:75.5px;height:24.1px;border-radius:4.500px;background:#f6f7fd"></div><div class="abs" style="left:416.60px;top:505.46px;width:75.5px;height:24.1px;border-radius:4.500px;background:#f6f7fd"></div><div class="abs" style="left:495.88px;top:505.46px;width:75.5px;height:24.1px;border-radius:4.500px;background:#c8d0fb"></div><div class="abs" style="left:575.16px;top:505.46px;width:75.5px;height:24.1px;border-radius:4.500px;background:#c8d0fb"></div><div class="abs" style="left:654.44px;top:505.46px;width:75.5px;height:24.1px;border-radius:4.500px;background:#a7b1f6"></div><div class="abs" style="left:733.72px;top:505.46px;width:75.5px;height:24.1px;border-radius:4.500px;background:#f6f7fd"></div><div class="abs" style="left:813.00px;top:505.46px;width:75.5px;height:24.1px;border-radius:4.500px;background:#a7b1f6"></div><div class="abs" style="left:892.28px;top:505.46px;width:75.5px;height:24.1px;border-radius:4.500px;background:#f6f7fd"></div><div class="abs" style="left:416.60px;top:534.72px;width:75.5px;height:24.1px;border-radius:4.500px;background:#a7b1f6"></div><div class="abs" style="left:495.88px;top:534.72px;width:75.5px;height:24.1px;border-radius:4.500px;background:#6466e6"></div><div class="abs" style="left:575.16px;top:534.72px;width:75.5px;height:24.1px;border-radius:4.500px;background:#6466e6"></div><div class="abs" style="left:654.44px;top:534.72px;width:75.5px;height:24.1px;border-radius:4.500px;background:#6466e6"></div><div class="abs" style="left:733.72px;top:534.72px;width:75.5px;height:24.1px;border-radius:4.500px;background:#6466e6"></div><div class="abs" style="left:813.00px;top:534.72px;width:75.5px;height:24.1px;border-radius:4.500px;background:#6466e6"></div><div class="abs" style="left:892.28px;top:534.72px;width:75.5px;height:24.1px;border-radius:4.500px;background:#f6f7fd"></div><div class="abs" style="left:416.60px;top:563.98px;width:75.5px;height:24.1px;border-radius:4.500px;background:#c8d0fb"></div><div class="abs" style="left:495.88px;top:563.98px;width:75.5px;height:24.1px;border-radius:4.500px;background:#828cee"></div><div class="abs" style="left:575.16px;top:563.98px;width:75.5px;height:24.1px;border-radius:4.500px;background:#828cee"></div><div class="abs" style="left:654.44px;top:563.98px;width:75.5px;height:24.1px;border-radius:4.500px;background:#828cee"></div><div class="abs" style="left:733.72px;top:563.98px;width:75.5px;height:24.1px;border-radius:4.500px;background:#828cee"></div><div class="abs" style="left:813.00px;top:563.98px;width:75.5px;height:24.1px;border-radius:4.500px;background:#828cee"></div><div class="abs" style="left:892.28px;top:563.98px;width:75.5px;height:24.1px;border-radius:4.500px;background:#f6f7fd"></div><div class="abs" style="left:416.60px;top:593.24px;width:75.5px;height:24.1px;border-radius:4.500px;background:#c8d0fb"></div><div class="abs" style="left:495.88px;top:593.24px;width:75.5px;height:24.1px;border-radius:4.500px;background:#a7b1f6"></div><div class="abs" style="left:575.16px;top:593.24px;width:75.5px;height:24.1px;border-radius:4.500px;background:#a7b1f6"></div><div class="abs" style="left:654.44px;top:593.24px;width:75.5px;height:24.1px;border-radius:4.500px;background:#c8d0fb"></div><div class="abs" style="left:733.72px;top:593.24px;width:75.5px;height:24.1px;border-radius:4.500px;background:#a7b1f6"></div><div class="abs" style="left:813.00px;top:593.24px;width:75.5px;height:24.1px;border-radius:4.500px;background:#c8d0fb"></div><div class="abs" style="left:892.28px;top:593.24px;width:75.5px;height:24.1px;border-radius:4.500px;background:#f6f7fd"></div><div class="abs" style="left:416.60px;top:622.50px;width:75.5px;height:24.1px;border-radius:4.500px;background:#f6f7fd"></div><div class="abs" style="left:495.88px;top:622.50px;width:75.5px;height:24.1px;border-radius:4.500px;background:#f6f7fd"></div><div class="abs" style="left:575.16px;top:622.50px;width:75.5px;height:24.1px;border-radius:4.500px;background:#f6f7fd"></div><div class="abs" style="left:654.44px;top:622.50px;width:75.5px;height:24.1px;border-radius:4.500px;background:#f6f7fd"></div><div class="abs" style="left:733.72px;top:622.50px;width:75.5px;height:24.1px;border-radius:4.500px;background:#f6f7fd"></div><div class="abs" style="left:813.00px;top:622.50px;width:75.5px;height:24.1px;border-radius:4.500px;background:#f6f7fd"></div><div class="abs" style="left:892.28px;top:622.50px;width:75.5px;height:24.1px;border-radius:4.500px;background:#f6f7fd"></div>
<div class="card" style="left:1003px;top:391px;width:318.400px;height:238px"></div>
<svg class="ico" style="left:1024px;top:405.1px" width="20" height="20" viewBox="0 0 24 24" fill="none" stroke="#f0711f" stroke-width="1.7" stroke-linecap="round" stroke-linejoin="round" ><path d="M8.500 14.500A2.500 2.500 0 0 0 11 12c0-1.380-.5-2-1-3-1.072-2.143-.224-4.054 2-6 .5 2.500 2 4.900 4 6.500 2 1.600 3 3.500 3 5.500a7 7 0 1 1-14 0c0-1.153.433-2.294 1-3a2.500 2.500 0 0 0 2.500 2.500z"/></svg>
<div class="t" style="left:1049.60px;top:408.90px;font-size:12.4px;color:#111318;font-weight:700;letter-spacing:-0.227px;">Sequência de Estudo</div>
<svg class="ico" style="left:1180.6px;top:408px" width="12.3" height="13" viewBox="0 0 12.800 13" fill="none" stroke="#4a7ff7" stroke-width="1.25" stroke-linecap="round" stroke-linejoin="round" preserveAspectRatio="none"><rect x=".7" y="1.900" width="11.400" height="10.400" rx="1.600"/><path d="M.7 5.100H12.100M3.900 .7V3M8.900 .7V3"/></svg>
<div class="t" style="left:1198.00px;top:408.90px;font-size:11px;color:#4a7ff7;letter-spacing:-0.067px;">Calendário de Streak</div>
<svg class="ico" style="left:1025px;top:442.9px" width="10.8" height="10.8" viewBox="0 0 10.800 10.800" fill="none" stroke="#6b7280" stroke-width="0.9" stroke-linecap="round" stroke-linejoin="round" ><circle cx="5.400" cy="5.400" r="4.800"/><circle cx="5.400" cy="5.400" r="3"/><circle cx="5.400" cy="5.400" r="1.200"/></svg>
<div class="t" style="left:1040.80px;top:442.90px;font-size:11px;color:#6b7280;letter-spacing:-0.132px;">Meta Diária</div>
<div class="t" style="left:1025.10px;top:461.70px;font-size:12.8px;color:#14161b;letter-spacing:-0.359px;-webkit-text-stroke:.22px #14161b;">Estudar 171 min</div>
<div class="abs" style="left:1024.8px;top:489.9px;width:24.3px;height:24.3px;border-radius:7.500px;background:#43b881"></div>
<div class="abs" style="left:1055.75px;top:489.9px;width:24.3px;height:24.3px;border-radius:7.500px;background:#43b881"></div>
<div class="abs" style="left:1086.7px;top:489.9px;width:24.3px;height:24.3px;border-radius:7.500px;background:#43b881"></div>
<div class="abs" style="left:1117.65px;top:489.9px;width:24.3px;height:24.3px;border-radius:7.500px;background:#43b881"></div>
<div class="abs" style="left:1148.6px;top:489.9px;width:24.3px;height:24.3px;border-radius:7.500px;background:#43b881"></div>
<div class="abs" style="left:1179.55px;top:489.9px;width:24.3px;height:24.3px;border-radius:7.500px;background:#43b881"></div>
<div class="abs" style="left:1209px;top:487.8px;width:27.8px;height:27.9px;border-radius:8.800px;background:#fafafb;border:1.900px solid #4fc48d"></div>
<div class="abs" style="left:1210.9px;top:489.7px;width:24px;height:24.1px;border-radius:7px;border:1.700px dashed #d2d6e3"></div>
<div class="t" style="left:1033.84px;top:520.00px;font-size:8.6px;color:#6b7280;">D</div>
<div class="t" style="left:1065.08px;top:520.00px;font-size:8.6px;color:#6b7280;">S</div>
<div class="t" style="left:1096.33px;top:520.00px;font-size:8.6px;color:#6b7280;">T</div>
<div class="t" style="left:1126.61px;top:520.00px;font-size:8.6px;color:#6b7280;">Q</div>
<div class="t" style="left:1157.61px;top:520.00px;font-size:8.6px;color:#6b7280;">Q</div>
<div class="t" style="left:1189.08px;top:520.00px;font-size:8.6px;color:#6b7280;">S</div>
<div class="t" style="left:1220.08px;top:520.00px;font-size:8.6px;color:#6b7280;">S</div>
<div class="abs" style="left:1025px;top:551px;width:130.6px;height:56.4px;border-radius:6.500px;background:#fff;border:1px solid #e5e7eb"></div>
<div class="t" style="left:1036.30px;top:563.60px;font-size:11px;color:#6b7280;letter-spacing:-0.034px;">Sequência Atual</div>
<div class="t" style="left:1036.30px;top:579.70px;font-size:13.6px;color:#111318;font-weight:700;letter-spacing:-0.089px;">61 Dias</div>
<div class="abs" style="left:1169.2px;top:551px;width:130.6px;height:56.4px;border-radius:6.500px;background:#fff;border:1px solid #e5e7eb"></div>
<div class="t" style="left:1180.50px;top:563.60px;font-size:11px;color:#6b7280;letter-spacing:-0.037px;">Maior Sequência</div>
<div class="t" style="left:1180.50px;top:579.70px;font-size:13.6px;color:#111318;font-weight:700;letter-spacing:-0.089px;">61 Dias</div>
<div class="card" style="left:1003px;top:643px;width:318.400px;height:300px"></div>
<svg class="ico" style="left:1024.6px;top:665.2px" width="16.4" height="16.4" viewBox="0 0 24 24" fill="none" stroke="#111318" stroke-width="2.1" stroke-linecap="round" stroke-linejoin="round" ><path d="M16 21v-2a4 4 0 0 0-4-4H6a4 4 0 0 0-4 4v2"/><circle cx="9" cy="7" r="4"/><path d="M22 21v-2a4 4 0 0 0-3-3.870"/><path d="M16 3.130a4 4 0 0 1 0 7.750"/></svg>
<div class="t" style="left:1049.40px;top:667.70px;font-size:12.6px;color:#111318;letter-spacing:0.101px;-webkit-text-stroke:.25px #111318;">Meus Grupos (3)</div>
<div class="t" style="left:1025.20px;top:690.40px;font-size:12.8px;color:#6b7280;letter-spacing:0.035px;">Grupos onde você está participando</div>
<div class="abs" style="left:1025px;top:711.3px;width:274.7px;height:51px;border-radius:8.500px;background:#f8f9fb"></div>
<div class="abs" style="left:1035px;top:723.1px;width:27.5px;height:27.5px;border-radius:50%;background:#f0f1f4"></div>
<div class="t" style="left:1045.21px;top:731.80px;font-size:10.6px;color:#374151;-webkit-text-stroke:.2px #374151;">P</div>
<div class="t" style="left:1073.40px;top:724.60px;font-size:12.8px;color:#111318;letter-spacing:-0.308px;-webkit-text-stroke:.22px #111318;">PC-PI</div>
<div class="t" style="left:1073.40px;top:740.60px;font-size:11px;color:#6b7280;letter-spacing:0.088px;">3/4 online</div>
<div class="abs" style="left:1258px;top:721.3px;width:32px;height:31px;border-radius:6px;background:#fbfbfc;box-shadow:0 1px 3px rgba(16,24,40,.03)"></div>
<svg class="ico" style="left:1267.4px;top:730.3px" width="13.6" height="13.6" viewBox="0 0 24 24" fill="none" stroke="#111318" stroke-width="2.2" stroke-linecap="round" stroke-linejoin="round" ><path d="M2.062 12.348a1 1 0 0 1 0-.696 10.750 10.750 0 0 1 19.876 0 1 1 0 0 1 0 .696 10.750 10.750 0 0 1-19.876 0"/><circle cx="12" cy="12" r="3"/></svg>
<div class="abs" style="left:1025px;top:773.4px;width:274.7px;height:51px;border-radius:8.500px;background:#f8f9fb"></div>
<div class="abs" style="left:1035px;top:785.2px;width:27.5px;height:27.5px;border-radius:50%;background:#f0f1f4"></div>
<div class="t" style="left:1045.51px;top:793.90px;font-size:10.6px;color:#374151;-webkit-text-stroke:.2px #374151;">T</div>
<div class="t" style="left:1073.40px;top:786.70px;font-size:12.8px;color:#111318;letter-spacing:-1.203px;-webkit-text-stroke:.22px #111318;">PRF</div>
<div class="t" style="left:1073.40px;top:802.70px;font-size:11px;color:#6b7280;letter-spacing:0.088px;">2/5 online</div>
<div class="abs" style="left:1258px;top:783.4px;width:32px;height:31px;border-radius:6px;background:#fbfbfc;box-shadow:0 1px 3px rgba(16,24,40,.03)"></div>
<svg class="ico" style="left:1267.4px;top:792.4px" width="13.6" height="13.6" viewBox="0 0 24 24" fill="none" stroke="#111318" stroke-width="2.2" stroke-linecap="round" stroke-linejoin="round" ><path d="M2.062 12.348a1 1 0 0 1 0-.696 10.750 10.750 0 0 1 19.876 0 1 1 0 0 1 0 .696 10.750 10.750 0 0 1-19.876 0"/><circle cx="12" cy="12" r="3"/></svg>
<div class="card" style="left:339.700px;top:685.500px;width:650.300px;height:200px"></div>
<svg class="ico" style="left:361.8px;top:708.6px" width="16.4" height="13.6" viewBox="0 0 16.400 13.600" fill="none" stroke="#111318" stroke-width="1.5" stroke-linecap="round" stroke-linejoin="round" ><path d="M8.200 2.500C6.900 1.300 5 .8 .8 .8V10.800C5 10.800 6.900 11.300 8.200 12.600C9.500 11.300 11.400 10.800 15.600 10.800V.8C11.400 .8 9.500 1.300 8.200 2.500ZM8.200 2.500V12.600"/></svg>
<div class="t" style="left:386.10px;top:710.30px;font-size:12.4px;color:#111318;font-weight:700;letter-spacing:-0.334px;">Ações Rápidas</div>
<div class="t" style="left:361.80px;top:731.70px;font-size:12.8px;color:#6b7280;letter-spacing:-0.038px;">O que você gostaria de fazer agora?</div>
<div class="abs" style="left:361.3px;top:753.3px;width:298.7px;height:60px;border-radius:6.500px;background:#467cf6"></div>
<svg class="ico" style="left:378.4px;top:771.3px" width="10" height="11" viewBox="0 0 10 11" fill="none" stroke="#fff" stroke-width="1.2" stroke-linecap="round" stroke-linejoin="round" ><path d="M1 1L9 5.500L1 10Z"/></svg>
<div class="t" style="left:396.80px;top:771.30px;font-size:12.8px;color:#fff;letter-spacing:-0.045px;-webkit-text-stroke:.2px #fff;">Iniciar Sessão Solo</div>
<div class="t" style="left:376.30px;top:792.90px;font-size:11px;color:#e8efff;letter-spacing:0.048px;">Comece a estudar sozinho</div>
<div class="abs" style="left:670.5px;top:753.3px;width:297.3px;height:60px;border-radius:6.500px;background:#fff;border:1px solid #e5e7eb"></div>
<svg class="ico" style="left:686.2px;top:771.8px" width="10" height="10" viewBox="0 0 10 10" fill="none" stroke="#111318" stroke-width="1.25" stroke-linecap="round" stroke-linejoin="round" ><path d="M5 .5V9.500M.5 5H9.500"/></svg>
<div class="t" style="left:706.00px;top:771.30px;font-size:12.8px;color:#111318;letter-spacing:-0.054px;-webkit-text-stroke:.2px #111318;">Registrar Estudo Manual</div>
<div class="t" style="left:686.00px;top:792.90px;font-size:11px;color:#6b7280;letter-spacing:0.052px;">Adicione uma sessão já concluída</div>
</div>
<div id="tb" class="abs" style="left:0;top:0;width:1280px;height:53.5px;background:#fff;border-bottom:1px solid #e4e4e6">
 <div class="abs" style="left:21px;top:20px;width:12px;height:12px;border-radius:50%;background:#ed6a5e"></div>
 <div class="abs" style="left:41px;top:20px;width:12px;height:12px;border-radius:50%;background:#f5bf4f"></div>
 <div class="abs" style="left:61px;top:20px;width:12px;height:12px;border-radius:50%;background:#61c454"></div>
 <!-- sidebar icon -->
 <svg class="ico" style="left:98px;top:17.5px" width="22" height="18" viewBox="0 0 22 18" fill="none" stroke="#6a6a6a" stroke-width="1.35" stroke-linecap="round">
  <rect x="1.5" y="1.4" width="18.3" height="14.2" rx="3"/><line x1="7.4" y1="1.6" x2="7.4" y2="15.4"/>
  <line x1="3.5" y1="4.6" x2="5.4" y2="4.6" stroke-width="1"/><line x1="3.5" y1="6.7" x2="5.4" y2="6.7" stroke-width="1"/><line x1="3.5" y1="8.8" x2="5.4" y2="8.8" stroke-width="1"/>
 </svg>
 <svg class="ico" style="left:144px;top:17px" width="14" height="18" viewBox="0 0 14 18" fill="none" stroke="#4e4e4e" stroke-width="1.7" stroke-linecap="round" stroke-linejoin="round"><path d="M10.3 2.7 L3.4 9.1 L10.3 15.6"/></svg>
 <svg class="ico" style="left:176px;top:17px" width="14" height="18" viewBox="0 0 14 18" fill="none" stroke="#bcbcbc" stroke-width="1.7" stroke-linecap="round" stroke-linejoin="round"><path d="M4.2 2.7 L11 9.1 L4.2 15.6"/></svg>
 <!-- shield -->
 <svg class="ico" style="left:348px;top:16.5px" width="17" height="20" viewBox="0 0 17 20" fill="none"><path d="M8.4 1.9 C6 3.2 3.9 3.7 1.9 4 V9.8 C1.9 13.6 4.5 16.2 8.4 18 C12.3 16.2 14.9 13.6 14.9 9.8 V4 C12.9 3.7 10.8 3.2 8.4 1.9 Z" stroke="#6e6e6e" stroke-width="1.3" stroke-linejoin="round"/><path d="M8.4 1.9 C6 3.2 3.9 3.7 1.9 4 V9.8 C1.9 13.6 4.5 16.2 8.4 18 Z" fill="#747474"/></svg>
 <!-- url bar -->
 <div class="abs" style="left:382px;top:12.3px;width:516px;height:27.6px;border-radius:6px;background:#f1f1f2"></div>
 <svg class="ico" style="left:600.6px;top:19.6px" width="9" height="13" viewBox="0 0 9 13"><rect x=".4" y="5.2" width="7.9" height="6.7" rx="1.2" fill="#8b8b8b"/><path d="M2.1 5.6 V3.6 A2.25 2.25 0 0 1 6.6 3.6 V5.6" fill="none" stroke="#8b8b8b" stroke-width="1.1"/></svg>
 <div class="t" id="url" style="left:615px;top:19.5px;font-size:13.4px;color:#4c4c4c;letter-spacing:.02px">figma.com</div>
 <!-- reload -->
 <svg class="ico" style="left:878.5px;top:19px" width="16" height="16" viewBox="0 0 16 16" fill="none" stroke="#6e6e6e" stroke-width="1.15" stroke-linecap="round" stroke-linejoin="round"><path d="M13.2 8.2 A5.3 5.3 0 1 1 9.3 3.0"/><path d="M8 .9 L10.4 3.0 L7.9 5.2"/></svg>
 <!-- download -->
 <svg class="ico" style="left:1119px;top:16.5px" width="19" height="19" viewBox="0 0 19 19" fill="none" stroke="#6a6a6a" stroke-width="1.35" stroke-linecap="round" stroke-linejoin="round"><circle cx="9.4" cy="9.4" r="7.8"/><path d="M9.4 5.3 V13.3 M6.2 10.3 L9.4 13.4 L12.6 10.3"/></svg>
 <!-- share -->
 <svg class="ico" style="left:1160px;top:14.5px" width="19" height="22" viewBox="0 0 19 22" fill="none" stroke="#6a6a6a" stroke-width="1.35" stroke-linecap="round" stroke-linejoin="round"><path d="M6.3 8.1 H4.6 A1.7 1.7 0 0 0 2.9 9.8 V17.7 A1.7 1.7 0 0 0 4.6 19.4 H14.2 A1.7 1.7 0 0 0 15.9 17.700 V9.8 A1.7 1.7 0 0 0 14.2 8.1 H12.500"/><path d="M9.4 13.2 V2.4 M6.5 5.1 L9.4 2.2 L12.3 5.1"/></svg>
 <!-- plus -->
 <svg class="ico" style="left:1202px;top:18px" width="17" height="17" viewBox="0 0 17 17" fill="none" stroke="#6a6a6a" stroke-width="1.45" stroke-linecap="round"><path d="M8.5 1.6 V15.000 M1.800 8.3 H15.200"/></svg>
 <!-- tabs -->
 <svg class="ico" style="left:1241px;top:15.5px" width="21" height="21" viewBox="0 0 21 21" fill="none" stroke="#6a6a6a" stroke-width="1.35" stroke-linejoin="round"><path d="M6.3 14.6 H4.900 A2.3 2.3 0 0 1 2.6 12.3 V4.8 A2.3 2.3 0 0 1 4.900 2.5 H12.400 A2.3 2.3 0 0 1 14.700 4.8 V6.0"/><rect x="6.7" y="6.500" width="12.2" height="12.3" rx="2.4"/></svg>
</div>

</div>
</body>
</html>
